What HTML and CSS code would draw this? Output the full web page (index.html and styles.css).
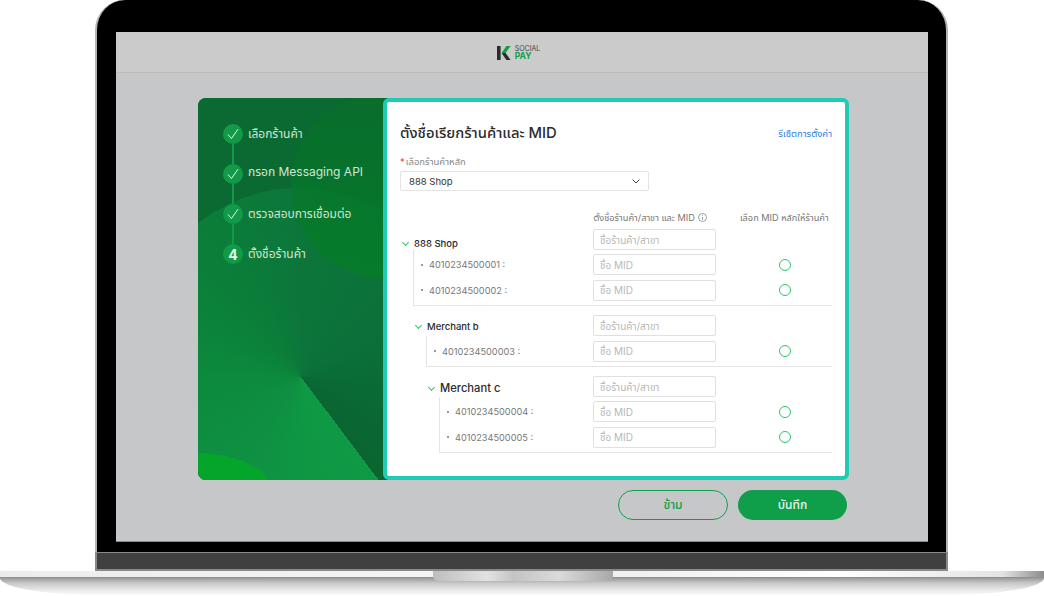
FILE: index.html
```html
<!DOCTYPE html>
<html lang="en">

<head>
    <meta charset="UTF-8">
    <meta name="viewport" content="width=device-width, initial-scale=1.0">
    <title>K Social Pay - Setup</title>
    <link rel="stylesheet" href="styles.css">
</head>

<body>

    <div class="laptop">
        <div class="lid">
            <div class="screen">

                <header class="topbar">
                    <div class="logo">
                        <svg class="logo-mark" width="14" height="14" viewBox="0 0 14 14">
                            <rect x="0" y="0" width="3.6" height="14" fill="#2b2b2b" />
                            <polygon points="4.6,7 9.4,0 13.6,0 8.6,7" fill="#0f9e4a" />
                            <polygon points="4.6,7 8.6,7 13.6,14 9.4,14" fill="#2b2b2b" />
                        </svg>
                        <div class="logo-text">
                            <span class="logo-social">SOCIAL</span>
                            <span class="logo-pay">PAY</span>
                        </div>
                    </div>
                </header>

                <main class="content">
                    <div class="wizard">

                        <aside class="sidebar">
                            <div class="sidebar-fan"></div>
                            <div class="sidebar-blob"></div>
                            <ul class="steps">
                                <li class="step">
                                    <span class="step-dot">
                                        <svg width="12" height="12" viewBox="0 0 12 12"><path d="M1 6.5 L4.4 10.6 L11 1.2" fill="none" stroke="#e8f5ec" stroke-width="1" /></svg>
                                    </span>
                                    <span class="step-label">เลือกร้านค้า</span>
                                </li>
                                <li class="step">
                                    <span class="step-dot">
                                        <svg width="12" height="12" viewBox="0 0 12 12"><path d="M1 6.5 L4.4 10.6 L11 1.2" fill="none" stroke="#e8f5ec" stroke-width="1" /></svg>
                                    </span>
                                    <span class="step-label step-label-up">กรอก Messaging API</span>
                                </li>
                                <li class="step">
                                    <span class="step-dot">
                                        <svg width="12" height="12" viewBox="0 0 12 12"><path d="M1 6.5 L4.4 10.6 L11 1.2" fill="none" stroke="#e8f5ec" stroke-width="1" /></svg>
                                    </span>
                                    <span class="step-label">ตรวจสอบการเชื่อมต่อ</span>
                                </li>
                                <li class="step">
                                    <span class="step-dot step-num">4</span>
                                    <span class="step-label">ตั้งชื่อร้านค้า</span>
                                </li>
                            </ul>
                        </aside>

                        <section class="panel">
                            <div class="panel-head">
                                <h2>ตั้งชื่อเรียกร้านค้าและ MID</h2>
                                <a class="reset-link" href="#">รีเซ็ตการตั้งค่า</a>
                            </div>

                            <label class="field-label"><span class="req">*</span>เลือกร้านค้าหลัก</label>
                            <div class="select">
                                <span>888 Shop</span>
                                <svg width="8" height="5" viewBox="0 0 8 5"><path d="M0.6 0.6 L4 4 L7.4 0.6" fill="none" stroke="#444" stroke-width="1" /></svg>
                            </div>

                            <div class="col-heads">
                                <div class="col-name">ตั้งชื่อร้านค้า/สาขา และ MID
                                    <svg width="9" height="9" viewBox="0 0 9 9"><circle cx="4.5" cy="4.5" r="4" fill="none" stroke="#777" stroke-width="0.7" /><path d="M4.5 4 V6.8 M4.5 2.2 V3.1" stroke="#777" stroke-width="0.8" /></svg>
                                </div>
                                <div class="col-main">เลือก MID หลักให้ร้านค้า</div>
                            </div>

                            <div class="group group-a">
                                <div class="row row-shop">
                                    <div class="row-label shop-name size-1"><span class="chev"></span>888 Shop</div>
                                    <input class="text-input" placeholder="ชื่อร้านค้า/สาขา">
                                    <div class="row-radio"></div>
                                </div>
                                <div class="mids">
                                    <div class="row">
                                        <div class="row-label mid-no">4010234500001 :</div>
                                        <input class="text-input" placeholder="ชื่อ MID">
                                        <div class="row-radio"><span class="radio"></span></div>
                                    </div>
                                    <div class="row">
                                        <div class="row-label mid-no">4010234500002 :</div>
                                        <input class="text-input" placeholder="ชื่อ MID">
                                        <div class="row-radio"><span class="radio"></span></div>
                                    </div>
                                </div>
                            </div>

                            <div class="group group-b">
                                <div class="row row-shop">
                                    <div class="row-label shop-name size-1"><span class="chev"></span>Merchant b</div>
                                    <input class="text-input" placeholder="ชื่อร้านค้า/สาขา">
                                    <div class="row-radio"></div>
                                </div>
                                <div class="mids">
                                    <div class="row">
                                        <div class="row-label mid-no">4010234500003 :</div>
                                        <input class="text-input" placeholder="ชื่อ MID">
                                        <div class="row-radio"><span class="radio"></span></div>
                                    </div>
                                </div>
                            </div>

                            <div class="group group-c">
                                <div class="row row-shop">
                                    <div class="row-label shop-name size-2"><span class="chev"></span>Merchant c</div>
                                    <input class="text-input" placeholder="ชื่อร้านค้า/สาขา">
                                    <div class="row-radio"></div>
                                </div>
                                <div class="mids">
                                    <div class="row">
                                        <div class="row-label mid-no">4010234500004 :</div>
                                        <input class="text-input" placeholder="ชื่อ MID">
                                        <div class="row-radio"><span class="radio"></span></div>
                                    </div>
                                    <div class="row">
                                        <div class="row-label mid-no">4010234500005 :</div>
                                        <input class="text-input" placeholder="ชื่อ MID">
                                        <div class="row-radio"><span class="radio"></span></div>
                                    </div>
                                </div>
                            </div>
                        </section>
                    </div>

                    <div class="actions">
                        <button class="btn btn-outline" type="button">ข้าม</button>
                        <button class="btn btn-fill" type="button">บันทึก</button>
                    </div>
                </main>
            </div>
        </div>

        <div class="hinge"></div>

        <div class="base">
            <div class="base-strip">
                <div class="notch"></div>
            </div>
            <div class="base-under"></div>
        </div>
    </div>

</body>

</html>
```

FILE: styles.css
```css
* {
    box-sizing: border-box;
}

html,
body {
    margin: 0;
    padding: 0;
    height: 596px;
    overflow: hidden;
    background-color: #fff;
    font-family: Inter, "Noto Sans Thai", "Noto Sans", sans-serif;
    color: #333;
}

/* laptop frame */
.laptop {
    width: 1044px;
    height: 596px;
}

.lid {
    width: 853px;
    height: 552px;
    margin-left: 95px;
    padding: 32px 19px 10px 19px;
    background-color: #000;
    border: solid #b4b4b4;
    border-width: 0 2px;
    border-radius: 30px 30px 0 0;
}

.screen {
    width: 812px;
    height: 510px;
    background-color: #c6c7c9;
    border-bottom: 1px solid #8a8a8a;
}

.hinge {
    width: 853px;
    height: 19px;
    margin-left: 95px;
    background-color: #404040;
    border: solid #8a8a8a;
    border-width: 1px 2px 2px;
}

.base {
    width: 1044px;
    height: 25px;
}

.base-strip {
    position: relative;
    height: 7px;
    background: linear-gradient(90deg, #ececec 0%, #f4f4f4 40%, #f0f0f0 60%, #fff 80%, #e4e4e4 96%, #8c8c8c 100%);
    border-bottom: 1px solid #8f8f8f;
}

.notch {
    position: absolute;
    left: 433px;
    top: 0;
    width: 180px;
    height: 10px;
    border-radius: 0 0 5px 5px;
    background: linear-gradient(90deg, #bdbdbd 0%, #e2e2e2 30%, #c4c4c4 45%, #dadada 70%, #a8a8a8 100%);
}

.base-under {
    height: 17px;
    background: linear-gradient(180deg, #9a9a9a 0%, #c8c8c8 30%, #e8e8e8 70%, #fbfbfb 100%);
    border-radius: 0 0 100px 100px / 0 0 17px 17px;
}

/* top bar */
.topbar {
    height: 41px;
    display: flex;
    align-items: center;
    justify-content: center;
    padding: 2px 7px 0 0;
    background-color: #cbcbcb;
    border-bottom: 1px solid #bcbcbc;
}

.logo {
    display: flex;
    align-items: center;
    gap: 4px;
}

.logo-text {
    display: flex;
    flex-direction: column;
    gap: 1px;
}

.logo-social {
    display: block;
    height: 6px;
    font-size: 7px;
    line-height: 6px;
    color: #444;
}

.logo-pay {
    display: block;
    height: 7px;
    font-size: 8.5px;
    line-height: 7px;
    font-weight: 700;
    color: #0f9e4a;
}

.content {
    padding: 25px 0 0 82px;
}

/* wizard card */
.wizard {
    display: flex;
    width: 650px;
    height: 382px;
    border-radius: 8px;
    background: linear-gradient(90deg, #0a6a34 190px, transparent 190px);
}

.sidebar {
    position: relative;
    width: 185px;
    flex: none;
    padding: 25.5px 0 0 25px;
    overflow: hidden;
    background-color: #0b6a32;
    border-radius: 8px 0 0 8px;
}

.sidebar-fan {
    position: absolute;
    inset: 0;
    clip-path: path("M0 125 Q 85 62 186 112 V382 H0 Z");
    background:
        radial-gradient(ellipse 75px 40px at 0 395px, #05a52b 99%, transparent 100%),
        conic-gradient(from 0deg at 103px 279px,
            #0c763a 0deg,
            #0b7039 60deg,
            #0a6a35 100deg,
            #0a6531 143deg,
            #0f9a46 143deg,
            #0f9744 175deg,
            #0e9042 215deg,
            #0c8a3e 270deg,
            #0b7f39 320deg,
            #0c763a 360deg);
}

.sidebar-blob {
    position: absolute;
    left: 93px;
    top: -6px;
    width: 186px;
    height: 186px;
    border-radius: 50%;
    background: linear-gradient(180deg, rgba(5, 110, 40, 0.5) 0%, rgba(5, 125, 40, 0.85) 100%);
}

.steps {
    position: relative;
    list-style: none;
    margin: 0;
    padding: 0;
    display: flex;
    flex-direction: column;
    gap: 20.33px;
}

.step {
    position: relative;
    display: flex;
    align-items: center;
    gap: 5px;
    height: 20px;
}

.step:not(:last-child)::after {
    content: "";
    position: absolute;
    left: 9px;
    top: 20px;
    width: 2px;
    height: 21px;
    background-color: #129a48;
}

.step-dot {
    width: 20px;
    height: 20px;
    display: flex;
    align-items: center;
    justify-content: center;
    border-radius: 50%;
    background-color: #129a48;
}

.step-num {
    color: #e8f5ec;
    font-size: 14px;
    font-weight: 700;
}

.step-label {
    font-size: 12px;
    color: #cfe6d6;
    white-space: nowrap;
}

.step-label-up {
    margin-top: -4px;
}

/* right panel */
.panel {
    flex: 1;
    padding: 20.5px 13px 0 13px;
    background-color: #fff;
    border: 4px solid #1fcbb5;
    border-radius: 6px;
}

.panel-head {
    display: flex;
    align-items: center;
    justify-content: space-between;
    height: 22px;
}

.panel-head h2 {
    margin: 0;
    font-size: 14.8px;
    font-weight: 500;
    color: #2b2b2b;
}

.reset-link {
    font-size: 9.5px;
    color: #2a7de1;
    text-decoration: none;
}

.field-label {
    display: block;
    margin-top: 10px;
    height: 13px;
    font-size: 9.5px;
    line-height: 13px;
    color: #888;
}

.req {
    color: #e8484d;
    margin-right: 1px;
}

.select {
    display: flex;
    align-items: center;
    justify-content: space-between;
    width: 249px;
    height: 20px;
    margin-top: 3.5px;
    padding: 0 8px;
    border: 1px solid #e3e3e3;
    border-radius: 2px;
    font-size: 9.5px;
    color: #333;
}

.col-heads {
    display: flex;
    margin-top: 19.5px;
    height: 13px;
    line-height: 13px;
    font-size: 9.2px;
    color: #777;
}

.col-name {
    margin-left: 193.5px;
    width: 146.5px;
    white-space: nowrap;
}

.col-name svg {
    vertical-align: -1px;
}

.col-main {
    width: 92px;
    white-space: nowrap;
}

/* merchant rows */
.group-b {
    margin-left: 13px;
    margin-top: 9.4px;
}

.group-c {
    margin-left: 26px;
    margin-top: 9.4px;
}

.row {
    display: flex;
    align-items: center;
    height: 21px;
}

.row + .row {
    margin-top: 4.5px;
}

.row-shop {
    margin-top: 5.5px;
}

.row-label {
    flex: 1;
    white-space: nowrap;
}

.shop-name {
    font-weight: 500;
    color: #2b2b2b;
}

.group-a .shop-name {
    padding-top: 7px;
}

.group-b .shop-name {
    padding-top: 1px;
}

.group-c .shop-name {
    padding-top: 3px;
}

.size-1 {
    font-size: 9.5px;
}

.size-2 {
    font-size: 11.2px;
}

.chev {
    display: inline-block;
    width: 5px;
    height: 5px;
    margin: 0 6px 2px 3px;
    border: solid #2fc46b;
    border-width: 0 1px 1px 0;
    transform: rotate(45deg);
}

.mids {
    margin-left: 13px;
    padding: 4.4px 0 4px;
    border: solid #e4e4e4;
    border-width: 0 0 1px 1px;
}

.mid-no {
    position: relative;
    padding-left: 15px;
    font-size: 9.2px;
    color: #777;
}

.mid-no::before {
    content: "";
    position: absolute;
    left: 7px;
    top: 50%;
    width: 2px;
    height: 2px;
    margin-top: -1px;
    border-radius: 50%;
    background-color: #777;
}

.text-input {
    width: 123px;
    height: 21px;
    flex: none;
    padding: 0 6px;
    border: 1px solid #e0e0e0;
    border-radius: 2px;
    font-family: inherit;
    font-size: 10px;
    background-color: #fff;
}

.text-input::placeholder {
    color: #b8b8b8;
}

.row-radio {
    width: 116px;
    flex: none;
    padding-left: 63px;
    display: flex;
}

.radio {
    width: 12px;
    height: 12px;
    border: 1px solid #2fc46b;
    border-radius: 50%;
}

/* bottom buttons */
.actions {
    display: flex;
    justify-content: flex-end;
    gap: 10px;
    width: 649px;
    margin-top: 10px;
}

.btn {
    width: 110px;
    height: 30px;
    padding: 0;
    border-radius: 15px;
    font-family: inherit;
    font-size: 12px;
    font-weight: 500;
}

.btn-outline {
    background-color: transparent;
    border: 1px solid #0f9e4a;
    color: #0f9e4a;
}

.btn-fill {
    width: 109px;
    background-color: #0f9e4a;
    border: none;
    color: #e8f5ec;
}
```
